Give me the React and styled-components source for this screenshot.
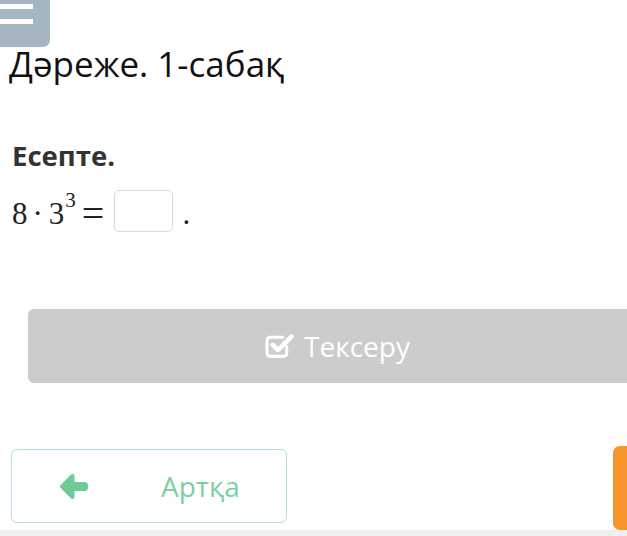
import styled, { createGlobalStyle } from "styled-components";

const Global = createGlobalStyle`
  html, body {
    margin: 0;
    padding: 0;
    background: #fff;
    overflow: hidden;
  }
  body {
    font-family: "Open Sans", "Noto Sans", sans-serif;
    width: 627px;
    height: 536px;
  }
`;

const Page = styled.div`
  width: 627px;
  height: 536px;
  overflow: hidden;
  display: flex;
  flex-direction: column;
`;

const MenuButton = styled.div`
  flex: none;
  width: 50px;
  height: 47px;
  background: #a5b6c3;
  border-bottom-right-radius: 7px;
  display: flex;
  flex-direction: column;
  gap: 10px;
  padding-top: 4px;
  box-sizing: border-box;

  & span {
    display: block;
    width: 33px;
    height: 5px;
    background: #fff;
  }
`;

const Title = styled.h1`
  margin: -3px 0 0 0;
  padding-left: 9px;
  font-weight: 400;
  font-size: 35px;
  line-height: 40px;
  color: #111;
  white-space: nowrap;
`;

const Prompt = styled.h2`
  margin: 56px 0 0 12px;
  font-weight: 700;
  font-size: 27.5px;
  line-height: 32px;
  color: #333;
`;

const MathRow = styled.div`
  margin: 18px 0 0 12px;
  display: flex;
  align-items: flex-end;
  font-family: "Liberation Serif", "DejaVu Serif", serif;
  font-size: 31px;
  line-height: 36px;
  color: #222;
  height: 42px;
`;

const Op = styled.span`
  margin: ${(p) => p.$m || "0"};
  font-size: ${(p) => p.$size || "31px"};
`;

const Sup = styled.span`
  font-size: 21px;
  line-height: 1;
  margin: 0 0 21px 1px;
`;

const AnswerBox = styled.div`
  width: 59px;
  height: 42px;
  border: 1px solid #d9d9d9;
  border-radius: 5px;
  margin: 0 9px 0 10px;
  box-sizing: border-box;
`;

const CheckButton = styled.div`
  flex: none;
  margin: 77px -20px 0 28px;
  height: 74px;
  background: #cccccc;
  border-radius: 6px;
  display: flex;
  align-items: center;
  justify-content: center;
  gap: 10px;
  color: #fff;
  font-size: 28px;
`;

const BottomRow = styled.div`
  flex: none;
  margin-top: 63px;
  display: flex;
  align-items: flex-start;
  justify-content: space-between;
  height: 84px;
`;

const BackButton = styled.div`
  margin: 3px 0 0 11px;
  width: 276px;
  height: 74px;
  border: 1px solid #b3e3c8;
  border-radius: 6px;
  box-sizing: border-box;
  display: flex;
  align-items: center;
  color: #7dd0a2;
  font-size: 28px;
`;

const ArrowWrap = styled.span`
  display: flex;
  margin: 0 72px 0 48px;
`;

const NextButton = styled.div`
  width: 100px;
  height: 84px;
  background: #f7952c;
  border-radius: 7px;
  margin-right: -86px;
`;

const Footer = styled.div`
  flex: none;
  height: 6px;
  background: #efefef;
`;

function CheckIcon() {
  return (
    <svg width="29" height="27" viewBox="0 0 28 26" fill="none">
      <path
        d="M21 13v6.5a3 3 0 0 1-3 3H5a3 3 0 0 1-3-3V7a3 3 0 0 1 3-3h12"
        stroke="#fff"
        strokeWidth="3"
        strokeLinecap="round"
      />
      <path
        d="M7.5 11.5l5 5L25.5 3.5"
        stroke="#fff"
        strokeWidth="4.5"
        strokeLinecap="round"
        strokeLinejoin="round"
      />
    </svg>
  );
}

function ArrowIcon() {
  return (
    <svg width="29" height="25" viewBox="0 0 29 25">
      <path
        d="M12.5 2 L2 12.5 L12.5 23 Z"
        fill="#6ccb97"
        stroke="#6ccb97"
        strokeWidth="4"
        strokeLinejoin="round"
      />
      <rect x="10" y="8" width="18" height="9" rx="3.5" fill="#6ccb97" />
    </svg>
  );
}

export default function App() {
  return (
    <>
      <Global />
      <Page>
        <MenuButton>
          <span />
          <span />
        </MenuButton>
        <Title>Дəреже. 1-сабақ</Title>
        <Prompt>Есепте.</Prompt>
        <MathRow>
          <Op>8</Op>
          <Op $m="0 6px 0 5px">·</Op>
          <Op>3</Op>
          <Sup>3</Sup>
          <Op $m="0 0 0 6px" $size="40px">=</Op>
          <AnswerBox />
          <Op>.</Op>
        </MathRow>
        <CheckButton>
          <CheckIcon />
          <span>Тексеру</span>
        </CheckButton>
        <BottomRow>
          <BackButton>
            <ArrowWrap>
              <ArrowIcon />
            </ArrowWrap>
            <span>Артқа</span>
          </BackButton>
          <NextButton />
        </BottomRow>
        <Footer />
      </Page>
    </>
  );
}
